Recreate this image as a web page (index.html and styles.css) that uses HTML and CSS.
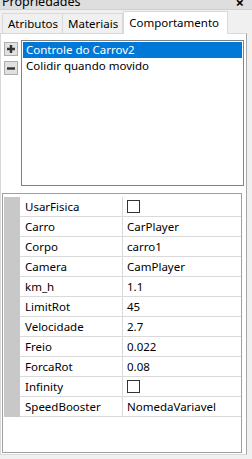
FILE: index.html
```html
<!DOCTYPE html>
<html>
<head>
<meta charset="utf-8">
<link rel="stylesheet" href="styles.css">
</head>
<body>
<div class="title"><span class="title-text">Propriedades</span><span class="close">×</span></div>
<div class="tabs">
  <div class="tab">Atributos</div>
  <div class="tab">Materiais</div>
  <div class="tab active">Comportamento</div>
</div>
<div class="page">
  <div class="top">
    <div class="btns">
      <div class="btn"><svg width="12" height="12" viewBox="0 0 12 12"><path d="M2 6h8M6 2v8" stroke="#333" stroke-width="2.4"/></svg></div>
      <div class="btn"><svg width="12" height="12" viewBox="0 0 12 12"><path d="M2 6.5h8" stroke="#333" stroke-width="2.4"/></svg></div>
    </div>
    <div class="list">
      <div class="item sel">Controle do Carrov2</div>
      <div class="item">Colidir quando movido</div>
    </div>
  </div>
  <div class="grid">
    <div class="row"><div class="gut"></div><div class="name">UsarFisica</div><div class="val"><span class="chk"></span></div></div>
    <div class="row"><div class="gut"></div><div class="name">Carro</div><div class="val">CarPlayer</div></div>
    <div class="row"><div class="gut"></div><div class="name">Corpo</div><div class="val">carro1</div></div>
    <div class="row"><div class="gut"></div><div class="name">Camera</div><div class="val">CamPlayer</div></div>
    <div class="row"><div class="gut"></div><div class="name">km_h</div><div class="val">1.1</div></div>
    <div class="row"><div class="gut"></div><div class="name">LimitRot</div><div class="val">45</div></div>
    <div class="row"><div class="gut"></div><div class="name">Velocidade</div><div class="val">2.7</div></div>
    <div class="row"><div class="gut"></div><div class="name">Freio</div><div class="val">0.022</div></div>
    <div class="row"><div class="gut"></div><div class="name">ForcaRot</div><div class="val">0.08</div></div>
    <div class="row"><div class="gut"></div><div class="name">Infinity</div><div class="val"><span class="chk"></span></div></div>
    <div class="row"><div class="gut"></div><div class="name">SpeedBooster</div><div class="val">NomedaVariavel</div></div>
  </div>
</div>
</body>
</html>
```
FILE: styles.css
```css
* { box-sizing: border-box; }
html, body { margin: 0; padding: 0; }
body {
  width: 252px;
  height: 459px;
  overflow: hidden;
  background: #f0f0f0;
  font-family: "Noto Sans", "Open Sans", sans-serif;
  font-size: 11.5px;
  color: #000;
}
.title {
  height: 10px;
  background: #dedede;
  display: flex;
  align-items: flex-end;
  justify-content: space-between;
  overflow: hidden;
  padding: 0 8px 0 2px;
  border-bottom: 1px solid #d0d0d0;
}
.title-text { line-height: 15px; font-size: 12.5px; }
.close { line-height: 14px; font-size: 15px; font-weight: bold; }
.tabs {
  height: 23px;
  display: flex;
  align-items: flex-end;
  padding-left: 2px;
  position: relative;
  z-index: 1;
}
.tab {
  height: 20px;
  line-height: 19px;
  padding: 0 4px 0 5px;
  border: 1px solid #d9d9d9;
  border-bottom: none;
  background: #f0f0f0;
}
.tab + .tab { border-left: none; }
.tab.active {
  height: 23px;
  line-height: 21px;
  background: #fff;
  margin-bottom: -1px;
  border-left: 1px solid #d9d9d9;
  padding: 0 8px 0 5px;
}
.page {
  width: 247px;
  height: 422px;
  background: #fff;
  border: 1px solid #d9d9d9;
  border-right-color: #a8a8a8;
  display: flex;
  flex-direction: column;
}
.top {
  display: flex;
  padding-top: 6px;
  height: 152px;
}
.btns {
  display: flex;
  flex-direction: column;
  gap: 5px;
  margin: 2px 3px 0 3px;
}
.btn {
  width: 14px;
  height: 14px;
  background: #e1e1e1;
  border: 1px solid #adadad;
  display: flex;
  align-items: center;
  justify-content: center;
}
.list {
  width: 223px;
  height: 146px;
  border: 1px solid #828282;
  padding: 1px;
}
.item {
  height: 16px;
  line-height: 15px;
  padding-left: 3px;
  white-space: nowrap;
}
.item.sel { background: #0078d7; color: #fff; }
.grid {
  margin: 7px 0 0 1px;
  width: 240px;
  height: 260px;
  border: 1px solid #a0a0a0;
  padding: 3px 0 0 1px;
}
.row {
  display: flex;
  height: 20px;
}
.gut { width: 16px; background: #c8c8c8; }
.name {
  width: 103px;
  border-bottom: 1px solid #dadada;
  border-right: 1px solid #dadada;
  padding-left: 5px;
  line-height: 19px;
  white-space: nowrap;
}
.val {
  flex: 1;
  border-bottom: 1px solid #dadada;
  padding-left: 4px;
  line-height: 19px;
  white-space: nowrap;
  display: flex;
  align-items: center;
}
.chk {
  width: 13px;
  height: 13px;
  border: 1px solid #333;
  background: #fff;
}
```
